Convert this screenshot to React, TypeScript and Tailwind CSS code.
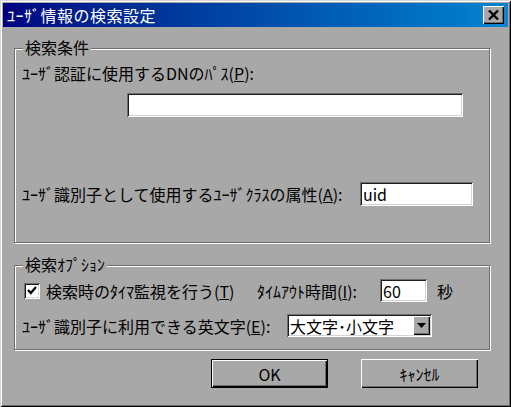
import React from "react";

const raised =
  "bg-[#a8a8a8] shadow-[inset_1px_1px_0_#ffffff,inset_-1px_-1px_0_#000000,inset_-2px_-2px_0_#6e6e6e]";
const sunken =
  "bg-white shadow-[inset_1px_1px_0_#6e6e6e,inset_-1px_-1px_0_#ffffff,inset_2px_2px_0_#1e1e1e,inset_-2px_-2px_0_#d4d4d4]";

const GroupBox = ({
  title,
  className,
  children,
}: {
  title: string;
  className: string;
  children: React.ReactNode;
}) => (
  <div
    className={`relative border border-[#6e6e6e] shadow-[inset_1px_1px_0_#ffffff,1px_1px_0_#ffffff] ${className}`}
  >
    <span className="absolute -top-[11px] left-[8px] bg-[#a8a8a8] px-[2px] leading-[18px]">
      {title}
    </span>
    {children}
  </div>
);

const App = () => {
  return (
    <div className="w-[511px] h-[407px] bg-[#a8a8a8] p-[3px] flex flex-col text-[16px] text-black font-['Noto_Sans_CJK_JP',sans-serif] shadow-[inset_1px_1px_0_#d8d8d8,inset_-1px_-1px_0_#000000,inset_2px_2px_0_#ffffff,inset_-2px_-2px_0_#6e6e6e]">
      {/* title bar */}
      <div className="h-[24px] flex items-center pl-[4px] pr-[4px] bg-linear-to-r from-[#000080] to-[#1084d0]">
        <span className="text-white leading-[18px] tracking-[0.5px]">ﾕｰｻﾞ情報の検索設定</span>
        <div className={`ml-auto w-[21px] h-[18px] flex items-center justify-center ${raised}`}>
          <svg width="11" height="10" viewBox="0 0 11 10">
            <path d="M1 0.5 L10 9.5 M10 0.5 L1 9.5" stroke="#000" strokeWidth="2.4" />
          </svg>
        </div>
      </div>

      <div className="pl-[11px] pt-[21px] flex flex-col">
        <GroupBox title="検索条件" className="w-[476px] h-[195px]">
          <div className="pl-[7px] pt-[16px] leading-[16px]">
            ﾕｰｻﾞ認証に使用するDNのﾊﾟｽ(<u>P</u>):
          </div>
          <div className={`ml-[112px] mt-[12px] w-[336px] h-[24px] ${sunken}`} />
          <div className="mt-[65px] pl-[7px] flex items-center">
            <span className="w-[338px] shrink-0 leading-[16px]">
              ﾕｰｻﾞ識別子として使用するﾕｰｻﾞｸﾗｽの属性(<u>A</u>):
            </span>
            <div className={`w-[113px] h-[24px] flex items-center pl-[3px] leading-[16px] ${sunken}`}>
              uid
            </div>
          </div>
        </GroupBox>

        <GroupBox title="検索ｵﾌﾟｼｮﾝ" className="mt-[22px] w-[476px] h-[85px]">
          <div className="pt-[13px] pl-[9px] flex items-center">
            <div className="w-[233px] shrink-0 flex items-center">
              <div className={`w-[16px] h-[16px] flex items-center justify-center ${sunken}`}>
                <svg width="10" height="9" viewBox="0 0 10 9">
                  <path d="M1 4 L3.8 7 L9 1" stroke="#000" strokeWidth="2.2" fill="none" />
                </svg>
              </div>
              <span className="ml-[6px] leading-[16px]">
                検索時のﾀｲﾏ監視を行う(<u>T</u>)
              </span>
            </div>
            <span className="w-[123px] shrink-0 leading-[16px]">
              ﾀｲﾑｱｳﾄ時間(<u>I</u>):
            </span>
            <div className={`w-[47px] h-[23px] flex items-center pl-[3px] leading-[16px] ${sunken}`}>
              60
            </div>
            <span className="ml-[10px] leading-[16px]">秒</span>
          </div>
          <div className="mt-[12px] pl-[7px] flex items-center">
            <span className="w-[265px] shrink-0 leading-[16px]">
              ﾕｰｻﾞ識別子に利用できる英文字(<u>E</u>):
            </span>
            <div className={`w-[145px] h-[23px] flex items-center pl-[3px] pr-[2px] ${sunken}`}>
              <span className="leading-[16px]">大文字･小文字</span>
              <div className={`ml-auto w-[17px] h-[19px] flex items-center justify-center ${raised}`}>
                <svg width="9" height="5" viewBox="0 0 9 5">
                  <path d="M0 0 H9 L4.5 5 Z" fill="#000" />
                </svg>
              </div>
            </div>
          </div>
        </GroupBox>

        <div className="mt-[9px] w-[476px] pr-[12px] flex justify-end gap-[33px]">
          <div className="w-[117px] h-[29px] border border-black">
            <div className={`w-full h-full flex items-center justify-center leading-[16px] ${raised}`}>
              OK
            </div>
          </div>
          <div className={`w-[117px] h-[29px] flex items-center justify-center leading-[16px] ${raised}`}>
            ｷｬﾝｾﾙ
          </div>
        </div>
      </div>
    </div>
  );
};

export default App;
